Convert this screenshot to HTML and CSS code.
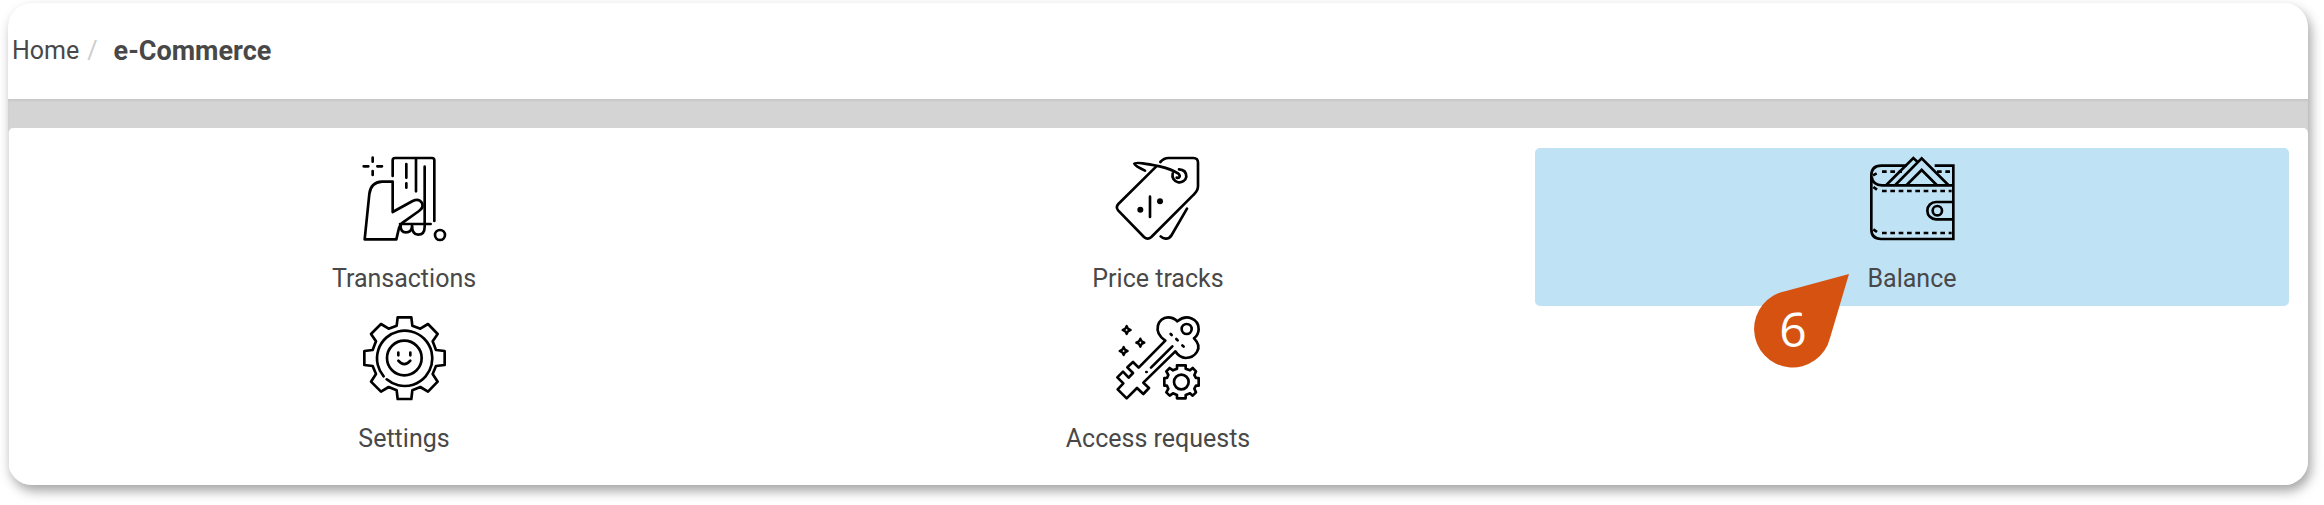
FILE: index.html
```html
<!DOCTYPE html>
<html lang="en">
<head>
<meta charset="utf-8">
<title>e-Commerce</title>
<link rel="stylesheet" href="styles.css">
</head>
<body>
<div class="window">
  <nav class="breadcrumb" aria-label="Breadcrumb">
    <a class="breadcrumb-link" href="#">Home</a>
    <span class="breadcrumb-separator">/</span>
    <span class="breadcrumb-current" aria-current="page">e-Commerce</span>
  </nav>
  <div class="content">
    <main class="panel">
      <a class="tile" href="#">
        <svg class="icon" viewBox="36 33 252 252" aria-hidden="true">
          <path d="M68 38v12M68 78v12M41 64h14M82 64h14"/>
          <path d="M128 93V46q0-7 7-7h111q7 0 7 7v182M169 57v41M169 115v13M198 40v99M224 65v180q0 24-20 24q-18 0-18-29M150 237h92"/>
          <path d="M128 110H96Q62 112 58 147L44 283h95l8-34q3-10 11-16l49-35q15-11 9-24q-9-15-28-6l-60 33V110M152 241q-1 21 16 21q16 0 18-16"/>
          <circle cx="270" cy="270" r="15"/>
        </svg>
        <span class="tile-label">Transactions</span>
      </a>
      <a class="tile" href="#">
        <svg class="icon" viewBox="36 33 252 252" aria-hidden="true">
          <path d="M157 64L43 177q-9 10 0 20l77 79q11 10 22 0L269 149q13-12 13-25V53q0-14-14-14h-75q-13 0-24 12"/>
          <path d="M123 77q-30-14-32-21c2-6 40 1 76 8q37 9 55 21c9 8 5 15-4 13M225 73q22 1 22 22a21 21 0 1 1-41-9M249 191l-46 79q-7 12-19 11q-8-1-14-7M138 155v61"/>
          <circle class="solid" cx="109" cy="194" r="9"/><circle class="solid" cx="168" cy="169" r="9"/>
        </svg>
        <span class="tile-label">Price tracks</span>
      </a>
      <div class="tile-slot">
        <a class="tile tile-active" href="#">
          <svg class="icon icon-square" viewBox="30 34 252 252" aria-hidden="true">
            <path d="M140 63H64Q34 63 34 93V254q0 29 29 29H280V63H224M35 97q4 25 31 25H280M280 172h-52a26 26 0 0 0 0 52h52"/>
            <path d="M79 121L160 40l12 11M106 121l79-80 80 80M140 121l45-45 45 45"/>
            <circle cx="232" cy="198" r="14"/>
            <path class="stitch" d="M66 81h60M231 81h44M66 139H275M66 265H275"/>
            <path d="M39 92l11-6M40 127l11 8M40 254l11 8"/>
          </svg>
          <span class="tile-label">Balance</span>
        </a>
        <div class="callout">
          <svg class="callout-shape" viewBox="0 0 97 96" aria-hidden="true"><path d="M96 1L33 18A38.500 38.500 0 1 0 77 65Z"/></svg>
          <span class="callout-number">6</span>
        </div>
      </div>
      <a class="tile" href="#">
        <svg class="icon" viewBox="36 33 252 252" aria-hidden="true">
          <path d="M143 37h41l3 25 24 9 23-14 29 30-15 22 10 26 26 3v42l-26 3-10 24 15 23-29 30-23-14-24 10-3 26h-41l-3-26-24-10-23 14-30-30 15-23-10-24-25-3v-42l25-3 10-26-15-22 30-30 23 14 24-9Z"/>
          <path d="M101 214A83 83 0 1 1 110 223"/>
          <circle cx="163" cy="159" r="52"/>
          <path d="M145 143v8M181 143v8M145 167q18 21 36 0"/>
        </svg>
        <span class="tile-label">Settings</span>
      </a>
      <a class="tile" href="#">
        <svg class="icon" viewBox="34 33 252 252" aria-hidden="true">
          <path d="M182 107C142 80 160 37 190 37Q207 37 218 49C246 25 283 42 282 73Q281 90 268 100C299 130 269 159 243 159Q224 158 212 139L116 233l17 16-17 18-19-18-31 31-27-27 17-18-18-18 17-17 17 18 13-14-17-17 17-16 17 17Z"/>
          <circle cx="246" cy="72" r="15"/>
          <path d="M203 124l-64 64M125 201h1M198 87l3 3M215 102l4 4M233 121l4 4"/>
          <path class="spark" d="M66 63l4 8 8 4-8 4-4 8-4-8-8-4 8-4ZM107 101l4 8 8 4-8 4-4 8-4-8-8-4 8-4ZM57 126l4 8 8 4-8 4-4 8-4-8-8-4 8-4Z"/>
          <path d="M217 181h26v10l13 5 8-7 10 10-5 11 5 9h8v23h-8l-5 9 5 11-10 10-8-7-13 5v10h-26v-10l-12-5-10 7-10-10 6-11-4-9h-8v-23h8l4-9-6-11 10-10 10 7 12-5Z"/>
          <circle cx="230" cy="231" r="22"/>
        </svg>
        <span class="tile-label">Access requests</span>
      </a>
    </main>
  </div>
</div>
</body>
</html>
```
FILE: styles.css
```css
* {
  box-sizing: border-box;
}

body {
  margin: 0;
  padding: 3px 16px 20px 8px;
  background: #fff;
  color: #484848;
  font-family: Roboto, "Liberation Sans", sans-serif;
  font-size: 25px;
  line-height: 32px;
}

a {
  color: inherit;
  text-decoration: none;
}

.window {
  overflow: hidden;
  border-radius: 24px;
  background: #fff;
  box-shadow: 3px 6px 12px rgba(0, 0, 0, 0.36);
}

.breadcrumb {
  display: flex;
  align-items: center;
  height: 96px;
  padding: 0 4px;
}

.breadcrumb-separator {
  margin: 0 16px 0 8px;
  color: #ccc;
}

.breadcrumb-current {
  font-size: 27px;
  font-weight: 700;
}

.content {
  padding-top: 29px;
  background: #d4d4d4;
  box-shadow: inset 0 2px 2px rgba(0, 0, 0, 0.06);
}

.panel {
  display: grid;
  grid-template-columns: repeat(3, 1fr);
  gap: 2px 0;
  padding: 20px 19px 19px 18px;
  border-left: 1px solid #e2e2e2;
  border-radius: 5px 5px 0 0;
  background: #fff;
}

.tile {
  display: flex;
  flex-direction: column;
  align-items: center;
  gap: 23px;
  height: 158px;
  padding-top: 8px;
  border-radius: 5px;
}

.tile-active {
  background: #bfe2f5;
}

.tile-slot {
  position: relative;
}

.icon {
  overflow: visible;
  width: 84px;
  height: 84px;
  fill: none;
  stroke: #000;
  stroke-width: 8;
  stroke-linecap: round;
  stroke-linejoin: round;
}

.icon .solid {
  fill: #000;
  stroke: none;
}

.icon .spark {
  stroke-width: 7;
}

.icon-square {
  stroke-linecap: butt;
  stroke-linejoin: miter;
}

.icon .stitch {
  stroke-dasharray: 14 11;
}

.callout {
  position: absolute;
  top: 125px;
  left: calc(50% - 159px);
  width: 97px;
  height: 96px;
}

.callout-shape {
  display: block;
  fill: #d65210;
}

.callout-number {
  position: absolute;
  left: 0;
  bottom: 0;
  width: 80px;
  color: #fff;
  font-family: "Open Sans", "Noto Sans", sans-serif;
  font-size: 48px;
  line-height: 80px;
  text-align: center;
}
```
